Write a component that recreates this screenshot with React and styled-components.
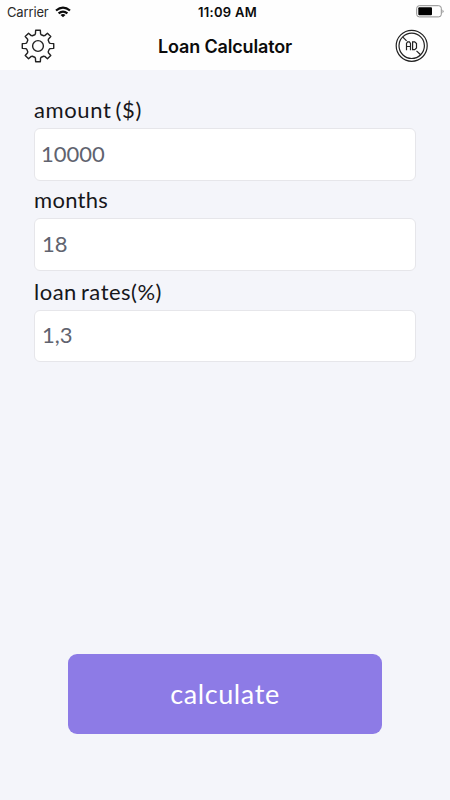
import React from "react";
import styled, { createGlobalStyle } from 'styled-components'

const GlobalStyle = createGlobalStyle`
    * {
        box-sizing: border-box;
    }

    body {
        margin: 0;
        background: #f4f5fa;
    }
`;

const Screen = styled.div`
    display: flex;
    flex-direction: column;
    width: 450px;
    height: 800px;
    background: #f4f5fa;
    overflow: hidden;
`;

const Header = styled.header`
    height: 70px;
    background: #fefefe;
    color: #0b0b0b;
    font-family: Inter, "Liberation Sans", sans-serif;
`;

const StatusBar = styled.div`
    display: grid;
    grid-template-columns: 1fr auto 1fr;
    align-items: center;
    height: 23px;
    padding: 0 6px 0 7px;
`;

const Carrier = styled.div`
    display: flex;
    align-items: center;
    gap: 6px;
    font-size: 13px;
    letter-spacing: -0.15px;
    color: #2a2a2a;
`;

const Clock = styled.div`
    padding-left: 4px;
    font-size: 13px;
    font-weight: 600;
    letter-spacing: 0.3px;
`;

const BatteryIcon = styled.svg`
    justify-self: end;
`;

const NavBar = styled.div`
    display: grid;
    grid-template-columns: 34px 1fr 34px;
    align-items: center;
    height: 46px;
    padding: 0 21px;
`;

const Title = styled.h1`
    margin: 0;
    font-size: 18px;
    font-weight: 600;
    letter-spacing: -0.15px;
    text-align: center;
`;

const IconButton = styled.button`
    display: flex;
    width: 34px;
    height: 34px;
    padding: 0;
    border: 0;
    background: none;
`;

const Form = styled.form`
    display: flex;
    flex-direction: column;
    flex: 1;
    padding: 24px 34px 66px;
    font-family: Lato, "Liberation Sans", sans-serif;
`;

const Field = styled.label`
    display: block;
    height: ${props => props.height}px;
`;

const Label = styled.span`
    display: block;
    height: 34px;
    line-height: 32px;
    font-size: 22px;
    letter-spacing: ${props => props.$spacing}px;
    word-spacing: -2px;
    color: #17171a;
`;

const Input = styled.input`
    display: block;
    width: 382px;
    height: ${props => props.$boxHeight}px;
    padding: 0 7px ${props => props.$lift}px ${props => props.$indent}px;
    border: 1px solid #e6e6ea;
    border-radius: 6px;
    outline: none;
    background: #fff;
    color: #60636f;
    font-family: inherit;
    font-size: 22px;
`;

const CalculateButton = styled.button`
    width: 314px;
    height: 80px;
    margin: auto auto 0 34px;
    padding: 0 0 1px 0;
    border: 0;
    border-radius: 9px;
    background: #8d7be6;
    color: #fff;
    font-family: inherit;
    font-size: 27px;
    letter-spacing: 0.6px;
`;

// eight teeth, one every 45 degrees
function gearPath(){
    const point = (r, deg) => {
        const a = deg * Math.PI / 180;
        return (17 + r * Math.sin(a)).toFixed(2) + " " + (17 - r * Math.cos(a)).toFixed(2);
    };
    let d = "";
    for(let i = 0; i < 8; i++){
        const t = i * 45;
        d += (i ? "L" : "M") + point(11.7, t - 16);
        d += "L" + point(12.4, t - 12);
        d += "L" + point(15.9, t - 8.5);
        d += "L" + point(15.9, t + 8.5);
        d += "L" + point(12.4, t + 12);
        d += "L" + point(11.7, t + 16);
    }
    return d + "Z";
}

const FIELDS = [
    {id: "amount", text: "amount ($)", height: 90, spacing: 0.6, indent: 6, boxHeight: 53, lift: 2},
    {id: "months", text: "months", height: 92, spacing: 0.3, indent: 7, boxHeight: 53, lift: 2},
    {id: "rates", text: "loan rates(%)", height: 86, spacing: 0.5, indent: 7, boxHeight: 52, lift: 3}
];

class App extends React.Component {

    constructor(props){
        super(props);
        this.state = {amount: "10000", months: "18", rates: "1,3"};
    }

    render() {
        return(
        <Screen>
            <GlobalStyle />
            <Header>
                <StatusBar>
                    <Carrier>
                        Carrier
                        <svg width="16" height="12" viewBox="0 0 16 12" fill="none" stroke="#0b0b0b" strokeWidth="2.2">
                            <path d="M1 4.5Q8 -1.4 15 4.5" />
                            <path d="M3.6 7.4Q8 3.7 12.4 7.4" />
                            <path d="M8 11.3L5.5 8.9Q8 7 10.5 8.9Z" fill="#0b0b0b" stroke="none" />
                        </svg>
                    </Carrier>
                    <Clock>11:09 AM</Clock>
                    <BatteryIcon width="28" height="13" viewBox="0 0 28 13">
                        <rect x="0.7" y="0.7" width="24.6" height="11.2" rx="2.6" fill="none" stroke="#8d8d8d" />
                        <rect x="2.3" y="2.3" width="13.7" height="8" rx="1" fill="#000" />
                        <path d="M26.5 4.4Q28.6 6.3 26.5 8.2Z" fill="#8d8d8d" />
                    </BatteryIcon>
                </StatusBar>
                <NavBar>
                    <IconButton type="button" aria-label="settings">
                        <svg width="34" height="34" viewBox="0 0 34 34" fill="none" stroke="#222" strokeWidth="1.4" strokeLinejoin="round">
                            <path d={gearPath()} />
                            <circle cx="17" cy="17" r="5.4" />
                        </svg>
                    </IconButton>
                    <Title>Loan Calculator</Title>
                    <IconButton type="button" aria-label="remove ads">
                        <svg width="34" height="34" viewBox="0 0 34 34" fill="none" stroke="#222" strokeWidth="1.2">
                            <circle cx="16.7" cy="16.8" r="15.5" />
                            <circle cx="16.7" cy="16.8" r="12.7" />
                            <path d="M7.6 7.8L11.6 11.8M21.5 21.9L25.6 25.8" />
                            <path d="M11.5 21.2V14.5L12.6 12.9H14.4L15.5 14.5V21.2M11.5 17.5H15.5M17.6 12.9V20.6H19.7L21.5 19V14.5L19.7 12.9Z" />
                        </svg>
                    </IconButton>
                </NavBar>
            </Header>
            <Form onSubmit={e => e.preventDefault()}>
                {FIELDS.map(item => (
                    <Field key={item.id} height={item.height}>
                        <Label $spacing={item.spacing}>{item.text}</Label>
                        <Input
                            $indent={item.indent}
                            $boxHeight={item.boxHeight}
                            $lift={item.lift}
                            value={this.state[item.id]}
                            onChange={e => this.onFieldChange(item.id, e)}
                        />
                    </Field>
                ))}
                <CalculateButton type="submit">calculate</CalculateButton>
            </Form>
        </Screen>
        )
    }

    onFieldChange(id, e) {
        this.setState({ [id]: e.target.value });
    }
}

export default App;
